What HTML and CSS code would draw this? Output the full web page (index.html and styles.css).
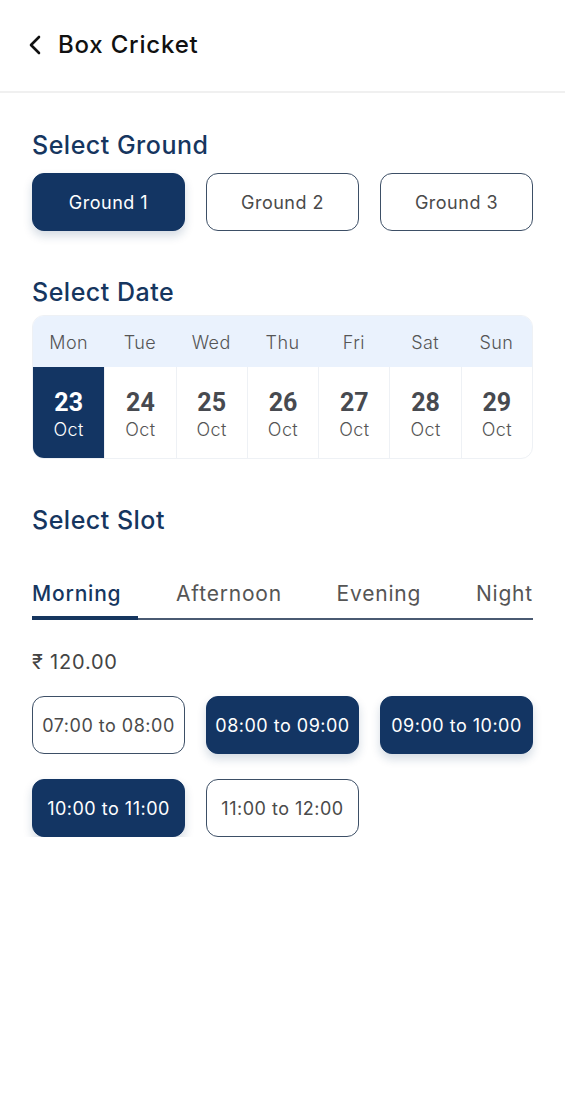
FILE: index.html
```html
<!DOCTYPE html>
<html>
<head>
<meta charset="utf-8">
<link rel="stylesheet" href="styles.css">
</head>
<body>
<header class="topbar">
  <svg class="back" width="16" height="22" viewBox="0 0 16 22"><path d="M12 3 L4 11 L12 19" fill="none" stroke="#111" stroke-width="2.6" stroke-linecap="round" stroke-linejoin="round"/></svg>
  <h1 class="title">Box Cricket</h1>
</header>
<main class="content">
  <h2 class="section-title t-ground">Select Ground</h2>
  <div class="btn-grid">
    <div class="pill active">Ground 1</div>
    <div class="pill">Ground 2</div>
    <div class="pill">Ground 3</div>
  </div>

  <h2 class="section-title t-date">Select Date</h2>
  <div class="calendar">
    <div class="cal-row days">
      <div>Mon</div><div>Tue</div><div>Wed</div><div>Thu</div><div>Fri</div><div>Sat</div><div>Sun</div>
    </div>
    <div class="cal-row dates">
      <div class="date sel"><span class="num">23</span><span class="mon">Oct</span></div>
      <div class="date"><span class="num">24</span><span class="mon">Oct</span></div>
      <div class="date"><span class="num">25</span><span class="mon">Oct</span></div>
      <div class="date"><span class="num">26</span><span class="mon">Oct</span></div>
      <div class="date"><span class="num">27</span><span class="mon">Oct</span></div>
      <div class="date"><span class="num">28</span><span class="mon">Oct</span></div>
      <div class="date"><span class="num">29</span><span class="mon">Oct</span></div>
    </div>
  </div>

  <h2 class="section-title t-slot">Select Slot</h2>
  <div class="tabs">
    <div class="tab on">Morning</div>
    <div class="tab">Afternoon</div>
    <div class="tab">Evening</div>
    <div class="tab">Night</div>
  </div>
  <div class="price">₹ 120.00</div>
  <div class="btn-grid slots">
    <div class="pill">07:00 to 08:00</div>
    <div class="pill active">08:00 to 09:00</div>
    <div class="pill active">09:00 to 10:00</div>
    <div class="pill active">10:00 to 11:00</div>
    <div class="pill">11:00 to 12:00</div>
  </div>
</main>
</body>
</html>
```
FILE: styles.css
```css
* { box-sizing: border-box; margin: 0; padding: 0; }
body {
  margin: 0;
  background: #fff;
  font-family: "Inter", "Open Sans", sans-serif;
  color: #444;
  width: 565px;
}
.topbar {
  height: 93px;
  border-bottom: 2px solid #f0f0f0;
  display: flex;
  align-items: center;
  padding-left: 27px;
  padding-bottom: 2px;
  gap: 15px;
}
.back { display: block; }
.title {
  font-size: 24px;
  font-weight: 500;
  color: #111;
  letter-spacing: 0.8px;
}
.content { padding: 0 32px; }
.section-title {
  font-size: 25px;
  font-weight: 500;
  color: #16365f;
  line-height: 30px;
  letter-spacing: 0.5px;
}
.t-ground { margin-top: 37px; }
.t-date { margin-top: 46px; }
.t-slot { margin-top: 46px; }
.btn-grid {
  display: grid;
  grid-template-columns: repeat(3, 153px);
  column-gap: 21px;
  row-gap: 25px;
  margin-top: 13px;
}
.pill {
  height: 58px;
  border: 1px solid #3d4f66;
  border-radius: 12px;
  display: flex;
  align-items: center;
  justify-content: center;
  font-size: 18px;
  letter-spacing: 0.5px;
  color: #4a4a4a;
  background: #fff;
}
.pill.active {
  background: #133563;
  border-color: #133563;
  color: #fff;
  box-shadow: 0 5px 10px rgba(19, 53, 99, 0.18);
}
.calendar {
  margin-top: 8px;
  border: 1px solid #eef1f5;
  border-radius: 12px;
  overflow: hidden;
}
.cal-row {
  display: grid;
  grid-template-columns: repeat(7, 1fr);
}
.days {
  background: #eaf2fd;
  height: 51px;
  align-items: center;
  text-align: center;
  font-size: 18px;
  font-weight: 300;
  color: #555;
  padding-top: 2px;
  letter-spacing: 0.4px;
}
.dates { height: 91px; }
.date {
  display: flex;
  flex-direction: column;
  align-items: center;
  justify-content: center;
  border-left: 1px solid #eef1f5;
  padding-top: 4px;
}
.date:first-child { border-left: none; }
.date.sel { background: #133563; color: #fff; }
.num {
  font-family: "Roboto", sans-serif;
  font-weight: 700;
  font-size: 25px;
  line-height: 30px;
  color: #474a50;
}
.mon {
  font-size: 18px;
  font-weight: 300;
  line-height: 24px;
  color: #555;
  letter-spacing: 0.4px;
}
.date.sel .num, .date.sel .mon { color: #fff; }
.tabs {
  margin-top: 40px;
  display: flex;
  justify-content: space-between;
  border-bottom: 2px solid #4a5a72;
  height: 45px;
}
.tab {
  font-size: 21px;
  color: #555;
  line-height: 32px;
  padding-top: 3px;
  letter-spacing: 0.8px;
}
.tab.on {
  color: #16365f;
  font-weight: 500;
  position: relative;
}
.tab.on::after {
  content: "";
  position: absolute;
  left: 0;
  width: 106px;
  bottom: -2px;
  height: 4px;
  background: #16365f;
}
.price {
  margin-top: 29px;
  font-size: 20px;
  color: #444;
  line-height: 26px;
  letter-spacing: 0.8px;
}
.slots { margin-top: 21px; }
```
